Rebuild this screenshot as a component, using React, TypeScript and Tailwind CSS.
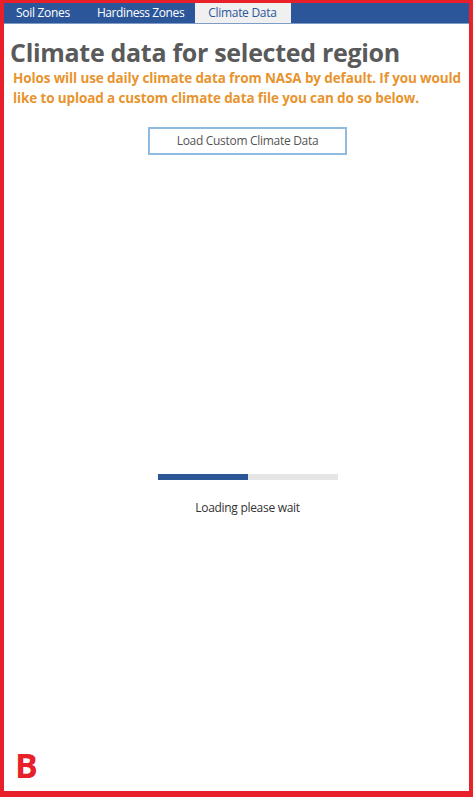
import React from "react";

export default function App() {
  const font = { fontFamily: '"Open Sans", "Noto Sans", sans-serif' };
  return (
    <div className="w-[473px] h-[797px] bg-[#e8202a] pt-[3px] pl-[4px] pr-[4px] pb-[6px]" style={font}>
      <div className="w-full h-full bg-white flex flex-col">
        <div className="h-[21px] bg-[#2b579a] flex items-stretch border-b border-[#7f9cc8] pl-[4px]">
          <div className="pl-[8px] pr-[14px] flex items-center text-[12px] text-white tracking-[-0.3px]">Soil Zones</div>
          <div className="pl-[13px] pr-[11px] flex items-center text-[12px] text-white tracking-[-0.4px]">Hardiness Zones</div>
          <div className="pl-[13px] pr-[14px] flex items-center text-[12px] text-[#2b579a] bg-[#f0f0f0] tracking-[-0.3px]">Climate Data</div>
        </div>
        <div className="pl-[6px] pt-[14px] text-[25px] font-bold text-[#5a5a5a] leading-[28px] tracking-[-0.3px]">
          Climate data for selected region
        </div>
        <div className="pl-[9px] pt-[2px] text-[13.5px] font-bold text-[#e8942e] leading-[20px] tracking-[-0.12px]">
          Holos will use daily climate data from NASA by default. If you would like to upload a custom climate data file you can do so below.
        </div>
        <div className="flex justify-center pt-[19px] pl-[22px]">
          <button className="w-[199px] h-[28px] border-2 border-[#8fbbe0] bg-white text-[12px] text-[#555] tracking-[-0.3px]">
            Load Custom Climate Data
          </button>
        </div>
        <div className="flex-1 flex flex-col items-center pt-[319px] pl-[22px]">
          <div className="w-[180px] h-[6px] bg-[#e6e6e6] flex">
            <div className="w-[90px] h-full bg-[#2b5797]" />
          </div>
          <div className="pt-[19px] text-[12px] text-[#333] tracking-[-0.3px]">Loading please wait</div>
        </div>
        <div className="pl-[11px] pb-[9px] text-[34px] font-bold text-[#e8202a] leading-[34px]" style={{ fontFamily: '"Open Sans", sans-serif' }}>
          B
        </div>
      </div>
    </div>
  );
}
